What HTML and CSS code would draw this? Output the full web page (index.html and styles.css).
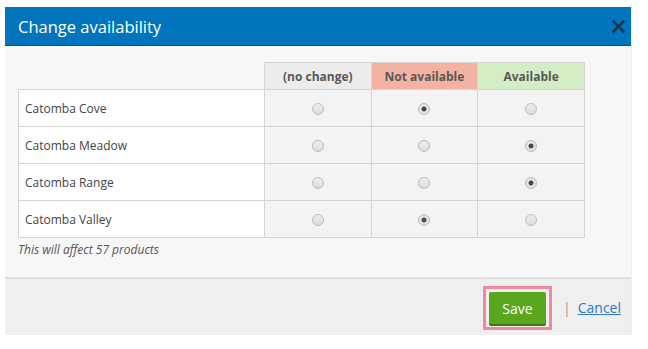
FILE: index.html
```html
<!DOCTYPE html>
<html lang="en">

<head>
    <meta charset="UTF-8">
    <meta name="viewport" content="width=device-width, initial-scale=1">
    <title>Change availability</title>
    <link rel="stylesheet" href="styles.css">
</head>

<body>
    <div class="dialog">
        <header class="dialog-header">
            <h1>Change availability</h1>
            <button class="close" aria-label="Close">
                <svg width="13" height="13" viewBox="0 0 13 13">
                    <path d="M1.5 1.5 L11.5 11.5 M11.5 1.5 L1.5 11.5" stroke="#1d3550" stroke-width="2.6" stroke-linecap="round"/>
                </svg>
            </button>
        </header>

        <div class="dialog-body">
            <table class="availability">
                <thead>
                    <tr>
                        <th class="blank"></th>
                        <th class="col-none">(no change)</th>
                        <th class="col-off">Not available</th>
                        <th class="col-on">Available</th>
                    </tr>
                </thead>
                <tbody>
                    <tr>
                        <td class="name">Catomba Cove</td>
                        <td><input type="radio" name="cove"></td>
                        <td><input type="radio" name="cove" checked></td>
                        <td><input type="radio" name="cove"></td>
                    </tr>
                    <tr>
                        <td class="name">Catomba Meadow</td>
                        <td><input type="radio" name="meadow"></td>
                        <td><input type="radio" name="meadow"></td>
                        <td><input type="radio" name="meadow" checked></td>
                    </tr>
                    <tr>
                        <td class="name">Catomba Range</td>
                        <td><input type="radio" name="range"></td>
                        <td><input type="radio" name="range"></td>
                        <td><input type="radio" name="range" checked></td>
                    </tr>
                    <tr>
                        <td class="name">Catomba Valley</td>
                        <td><input type="radio" name="valley"></td>
                        <td><input type="radio" name="valley" checked></td>
                        <td><input type="radio" name="valley"></td>
                    </tr>
                </tbody>
            </table>
            <p class="note">This will affect 57 products</p>
        </div>

        <footer class="dialog-footer">
            <span class="highlight">
                <button class="save">Save</button>
            </span>
            <span class="sep">|</span>
            <a href="#" class="cancel">Cancel</a>
        </footer>
    </div>
</body>

</html>
```

FILE: styles.css
```css
/* Base */
* {
    margin: 0;
    padding: 0;
    box-sizing: border-box;
}

body {
    font-family: "Open Sans", Arial, sans-serif;
    background: #ffffff;
    color: #444;
}

/* Dialog frame */
.dialog {
    width: 626px;
    margin: 7px 0 0 5px;
    background: #f7f7f7;
    box-shadow: 1px 0 0 #ececec;
}

.dialog-header {
    height: 39px;
    background: #0074bd;
    border-bottom: 1px solid #0b4f80;
    display: flex;
    align-items: center;
    justify-content: space-between;
    padding: 0 5px 0 13px;
}

.dialog-header h1 {
    font-size: 16.5px;
    font-weight: 400;
    color: #ffffff;
    letter-spacing: 0;
}

.close {
    background: none;
    border: none;
    width: 16px;
    height: 16px;
    display: flex;
    align-items: center;
    justify-content: center;
    cursor: pointer;
}

/* Body */
.dialog-body {
    padding: 16px 13px 0;
    height: 231px;
}

.availability {
    border-collapse: collapse;
    width: 567px;
    font-size: 12px;
    table-layout: fixed;
}

.availability th,
.availability td {
    border: 1px solid #d4d4d4;
}

.availability th {
    height: 27px;
    font-weight: 700;
    color: #585858;
    text-align: center;
}

.availability th.blank {
    width: 246px;
    border: none;
    border-bottom: 1px solid #d4d4d4;
}

.col-none {
    background: #ececec;
}

.col-off {
    background: #f4b3a2;
}

.col-on {
    background: #d5edc4;
}

.availability td {
    height: 37px;
    background: #f3f3f3;
    text-align: center;
    vertical-align: middle;
}

.availability td.name {
    background: #ffffff;
    text-align: left;
    padding-left: 6px;
    color: #444;
}

/* Radios */
input[type="radio"] {
    appearance: none;
    -webkit-appearance: none;
    width: 12px;
    height: 12px;
    border-radius: 50%;
    border: 1px solid #bdbdbd;
    background: linear-gradient(#eeeeee, #dcdcdc);
    vertical-align: middle;
    display: inline-block;
    margin: 0;
}

input[type="radio"]:checked {
    background: radial-gradient(circle, #4a4a4a 0, #4a4a4a 2.2px, #e6e6e6 2.8px, #dadada 100%);
}

.note {
    margin-top: 3px;
    font-size: 12px;
    font-style: italic;
    color: #555;
}

/* Footer */
.dialog-footer {
    height: 58px;
    background: #efefef;
    border-top: 2px solid #dedede;
    display: flex;
    align-items: center;
    justify-content: flex-end;
    padding-right: 10px;
}

.highlight {
    display: flex;
    padding: 3px;
    margin-top: 2px;
    border: 3px solid #f0899e;
}

.save {
    width: 57px;
    height: 32px;
    background: #5aa61c;
    color: #ffffff;
    border: none;
    border-radius: 2px;
    box-shadow: 0 2px 0 #3d7512;
    font-family: "Open Sans", Arial, sans-serif;
    font-size: 14px;
    cursor: pointer;
}

.sep {
    margin: 0 7px 0 11px;
    color: #9a9a9a;
    font-size: 14px;
}

.cancel {
    font-size: 14px;
    color: #2b7bc0;
    text-decoration: underline;
}
```
